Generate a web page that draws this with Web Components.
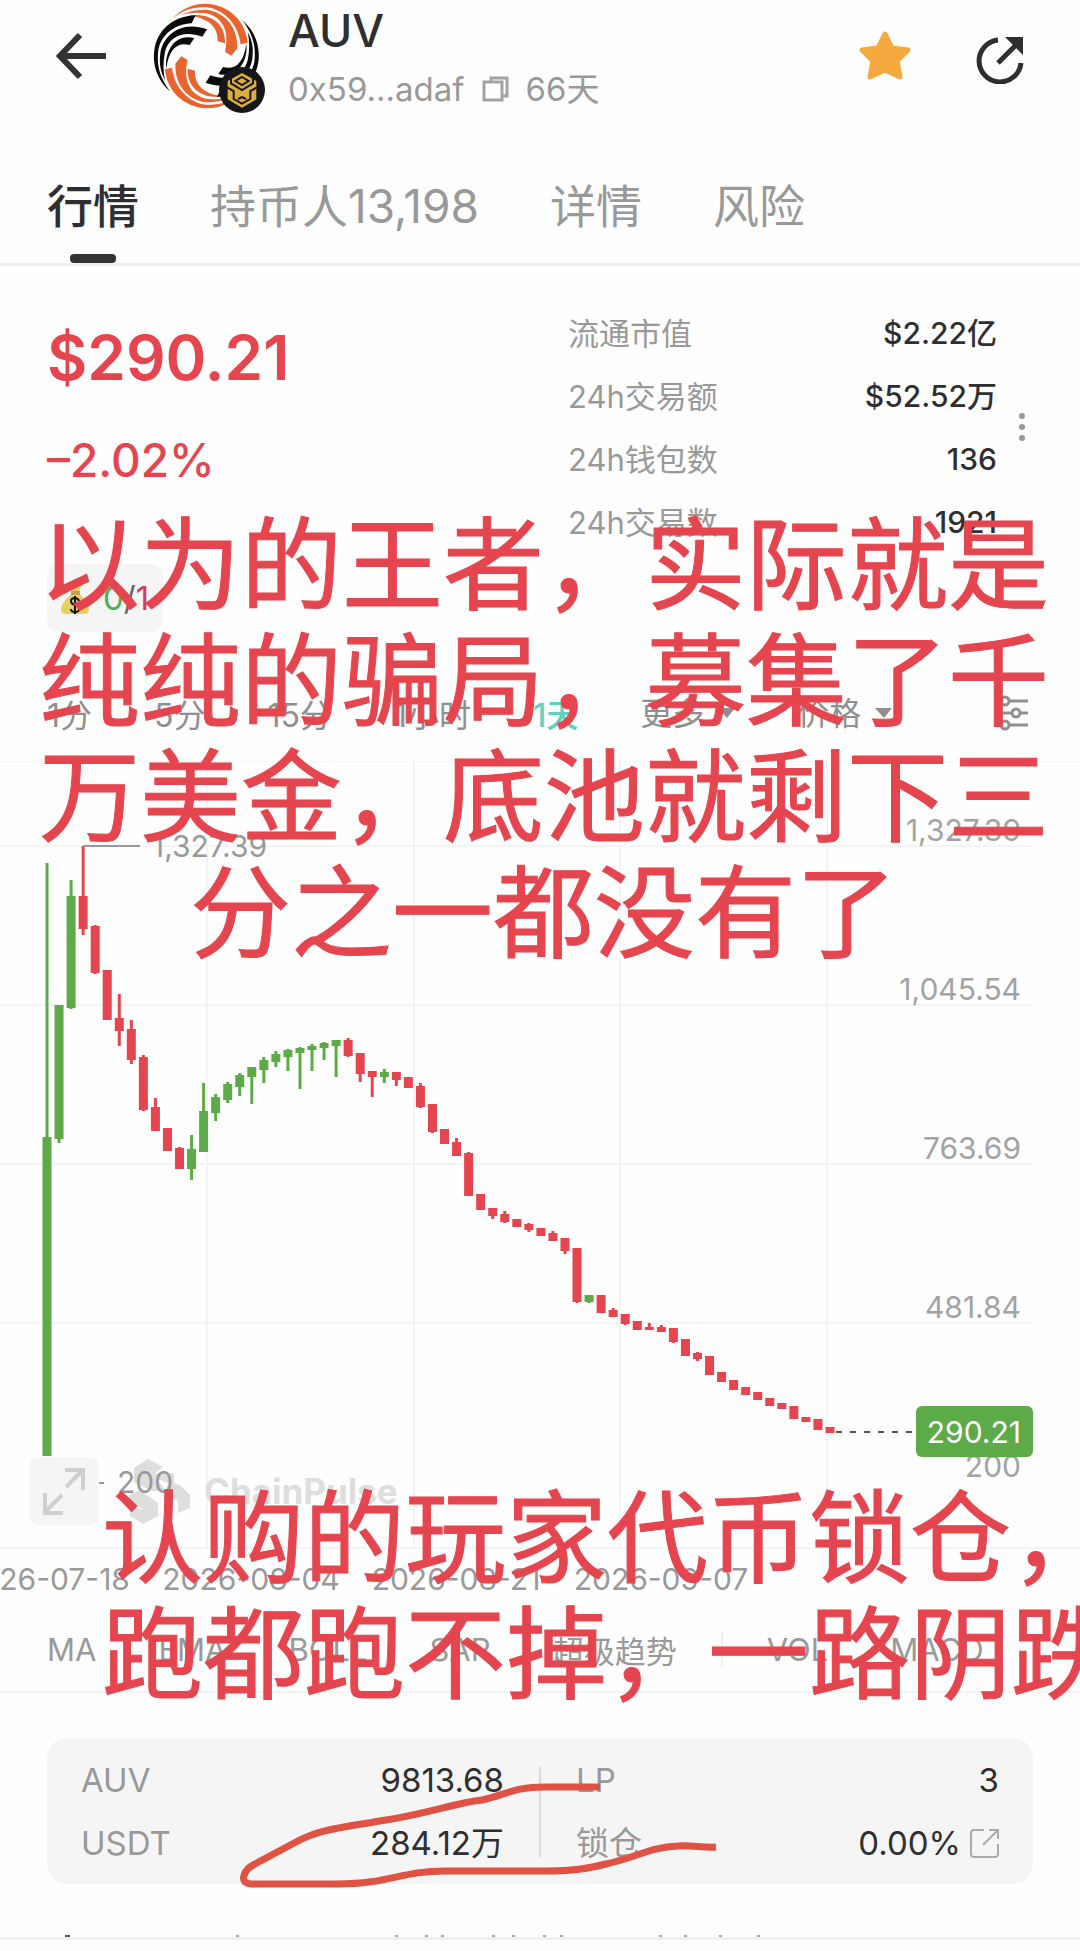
<!DOCTYPE html>
<html lang="zh-CN">
<head>
<meta charset="utf-8">
<meta name="viewport" content="width=device-width, initial-scale=1">
<title>AUV</title>
<style>
  :root {
    --text: #2f2f31;
    --muted: #999;
    --red: #e5454e;
    --green: #5cab48;
    --surface: #f5f5f5;
    --line: #f0f0f0;
    --gutter: 47px;
  }

  body {
    margin: 0;
    background: #fefefe;
    color: var(--text);
    font-family: Inter, "Noto Sans CJK SC", sans-serif;
    font-size: 33px;
  }
</style>
</head>
<body>
<token-page>
  <token-header name="AUV" address="0x59...adaf" age="66天"></token-header>
  <token-tabs>
    <a href="#market" aria-current="page">行情</a>
    <a href="#holders">持币人13,198</a>
    <a href="#detail">详情</a>
    <a href="#risk">风险</a>
  </token-tabs>
  <price-summary price="$290.21" change="–2.02%"></price-summary>
  <interval-bar></interval-bar>
  <price-chart></price-chart>
  <indicator-bar></indicator-bar>
  <pool-card></pool-card>
  <list-peek></list-peek>
  <note-text slot="notes" class="top">以为的王者，实际就是<br>纯纯的骗局，募集了千<br>万美金，底池就剩下三<br>分之一都没有了</note-text>
  <note-text slot="notes" class="bottom">认购的玩家代币锁仓，<br>跑都跑不掉，一路阴跌</note-text>
</token-page>

<script>
const resetStyles = `
  * { box-sizing: border-box; }
  button, select {
    margin: 0;
    padding: 0;
    border: none;
    background: none;
    color: inherit;
    font: inherit;
    cursor: pointer;
    appearance: none;
  }
  svg { display: block; }
  dl, dd, p, h1 { margin: 0; font-weight: inherit; }
`;

class BaseElement extends HTMLElement {
  constructor() {
    super();
    this.attachShadow({ mode: "open" });
  }

  connectedCallback() {
    const template = document.createElement("template");
    template.innerHTML = `<style>${resetStyles}${this.styles()}</style>${this.render()}`;
    this.shadowRoot.replaceChildren(template.content.cloneNode(true));
  }

  styles() {
    return "";
  }

  render() {
    return "";
  }
}

class TokenPage extends BaseElement {
  styles() {
    return `
      :host { display: block; position: relative; overflow: hidden; }
      ::slotted(note-text) { position: absolute; pointer-events: none; }
      ::slotted(.top) { top: 500px; left: 39px; right: 32px; text-align: center; }
      ::slotted(.bottom) { top: 1473px; left: 102px; }
    `;
  }

  render() {
    return `<main><slot></slot></main><slot name="notes"></slot>`;
  }
}

class NoteText extends BaseElement {
  styles() {
    return `
      :host {
        display: block;
        color: var(--red);
        font-family: "Noto Sans CJK SC", sans-serif;
        font-size: 101px;
        line-height: 116px;
        white-space: nowrap;
        -webkit-text-stroke: 1px var(--red);
      }
    `;
  }

  render() {
    return `<slot></slot>`;
  }
}

class TokenHeader extends BaseElement {
  styles() {
    return `
      :host {
        display: flex;
        align-items: flex-start;
        padding: 2px 56px;
      }
      button { display: grid; place-items: center; }
      .icon { height: 108px; }
      .logo { margin-left: 47px; }
      .info { margin-left: 22px; flex: 1; line-height: 58px; }
      h1 { font-size: 45px; font-weight: 500; line-height: 58px; }
      .sub { display: flex; align-items: center; gap: 17px; color: var(--muted); }
      .share { height: 116px; margin-left: 64px; }
    `;
  }

  render() {
    const orange = `
      <path d="M97 56C130 22 165 10 200 11C265 14 318 60 324 128L303 133C296 75 255 28 200 22C160 20 130 30 97 56Z"/>
      <path d="M125 45C150 32 175 29 200 29C255 36 295 80 293 145L275 167L256 156C272 90 245 50 200 40C170 37 150 38 125 45Z"/>
      <path d="M148 47C205 38 258 65 256 130L234 124C236 80 205 53 148 47Z"/>`;
    const black = `
      <path d="M92 275C50 240 38 190 44 150C52 95 95 48 168 46L156 70C110 72 66 100 56 150C50 200 62 235 92 275Z"/>
      <path d="M76 240C62 215 58 190 62 160C70 105 125 60 202 88L188 110C130 90 88 110 76 155C70 185 70 215 76 240Z"/>
      <path d="M80 205C74 160 102 98 164 114L150 135C115 125 88 145 80 205Z"/>`;
    return `
      <button class="icon" aria-label="返回">
        <svg width="50" height="46" viewBox="0 0 50 46" fill="none" stroke="#333" stroke-width="6">
          <path d="M50 23H3M24 2L4 23L24 44"/>
        </svg>
      </button>
      <svg class="logo" width="113" height="113" viewBox="40 6 339 339" aria-hidden="true">
        <g fill="#e9652f">${orange}<g transform="rotate(180 200 168)">${orange}</g></g>
        <g fill="#0b0b0b">${black}<g transform="rotate(180 200 168)">${black}</g></g>
        <circle cx="307" cy="270" r="69" fill="#17171b"/>
        <path d="M307 219L350 243V298L307 323L264 298V243Z" fill="#dcae3b"/>
        <g fill="none" stroke="#17171b" stroke-width="6">
          <path d="M307 231L327 243L307 255L287 243ZM262 262L282 273V297L307 311L332 297V273L352 262M274 236V250L307 270L340 250V236M295 297L307 291L319 297"/>
        </g>
      </svg>
      <div class="info">
        <h1>${this.getAttribute("name")}</h1>
        <div class="sub">
          <span>${this.getAttribute("address")}</span>
          <button aria-label="复制">
            <svg width="27" height="26" viewBox="0 0 27 26" fill="none" stroke="#a3a3a3" stroke-width="3">
              <path d="M2 6H20V24H2ZM9 6V2H25V20H20"/>
            </svg>
          </button>
          <span>${this.getAttribute("age")}</span>
        </div>
      </div>
      <button class="icon" aria-label="收藏">
        <svg width="54" height="52" viewBox="0 0 54 52" fill="#f5a93e" stroke="#f5a93e" stroke-width="5" stroke-linejoin="round">
          <path d="M27 4L34 18L50 20L39 31L42 47L27 40L12 47L15 31L4 20L20 18Z"/>
        </svg>
      </button>
      <button class="icon share" aria-label="分享">
        <svg width="48" height="48" viewBox="0 0 48 48" fill="none" stroke="#2f2f31" stroke-width="5">
          <path d="M22 4A21 21 0 1 0 45 27M22 27L42 7"/>
          <path d="M29 1H47V19Z" fill="#2f2f31" stroke="none"/>
        </svg>
      </button>
    `;
  }
}

class TokenTabs extends BaseElement {
  styles() {
    return `
      :host { display: block; border-bottom: 3px solid var(--line); }
      nav { display: flex; gap: 71px; padding: 53px var(--gutter) 0; font-size: 46px; line-height: 66px; }
      ::slotted(a) { position: relative; padding-bottom: 24px; color: var(--muted); text-decoration: none; }
      ::slotted(a[aria-current]) { color: var(--text); font-weight: 500; }
      ::slotted(a[aria-current])::after {
        content: "";
        position: absolute;
        bottom: 0;
        left: calc(50% - 23px);
        width: 46px;
        height: 9px;
        border-radius: 4px;
        background: #333;
      }
    `;
  }

  render() {
    return `<nav><slot></slot></nav>`;
  }
}

class PriceSummary extends BaseElement {
  styles() {
    return `
      :host {
        display: grid;
        grid-template-columns: 1fr 1fr;
        gap: 56px;
        padding: 36px var(--gutter) 0;
      }
      .quote { padding-top: 16px; color: var(--red); font-weight: 500; }
      .price { font-size: 62px; font-weight: 600; line-height: 80px; }
      .change { margin-top: 32px; font-size: 46px; line-height: 60px; }
      .signals {
        display: inline-flex;
        align-items: center;
        gap: 14px;
        height: 68px;
        margin-top: 74px;
        padding: 0 14px;
        border-radius: 12px;
        background: var(--surface);
        color: #666;
        font-weight: 400;
      }
      .ok { color: #4cb04f; }
      .bad { color: #c9435e; }
      .stats { display: flex; gap: 14px; align-items: flex-start; font-size: 31px; }
      dl { flex: 1; line-height: 63px; }
      dl div { display: flex; justify-content: space-between; height: 63px; }
      dt { color: var(--muted); }
      dd { font-size: 30px; font-weight: 500; }
      .more { width: 22px; margin-top: 108px; }
    `;
  }

  render() {
    const stats = [
      ["流通市值", "$2.22亿"],
      ["24h交易额", "$52.52万"],
      ["24h钱包数", "136"],
      ["24h交易数", "1921"],
    ];
    return `
      <div class="quote">
        <p class="price">${this.getAttribute("price")}</p>
        <p class="change">${this.getAttribute("change")}</p>
        <div class="signals">
          <svg width="28" height="34" viewBox="0 0 28 34" aria-hidden="true">
            <path d="M8 3Q14 7 21 3L18 11H11ZM10 13H19Q28 22 28 29Q28 33 23 33H5Q0 33 0 29Q0 22 10 13Z" fill="#e6cf63"/>
            <path d="M10 10H19V14H10Z" fill="#c99c4b"/>
            <path d="M18 20Q17 17 14 17Q10 17 10 20Q10 23 14 24Q18 25 18 28Q18 31 14 31Q10 31 10 28M14 15V33" fill="none" stroke="#111" stroke-width="2"/>
          </svg>
          <span><span class="ok">0</span>/<span class="bad">1</span></span>
        </div>
      </div>
      <div class="stats">
        <dl>${stats.map(([label, value]) => `<div><dt>${label}</dt><dd>${value}</dd></div>`).join("")}</dl>
        <button class="more" aria-label="更多数据">
          <svg width="22" height="34" viewBox="0 0 22 34" fill="#999">
            <circle cx="11" cy="6" r="3"/><circle cx="11" cy="17" r="3"/><circle cx="11" cy="28" r="3"/>
          </svg>
        </button>
      </div>
    `;
  }
}

class IntervalBar extends BaseElement {
  styles() {
    return `
      :host {
        display: flex;
        align-items: center;
        gap: 62px;
        height: 64px;
        margin: 49px 0 16px;
        padding: 0 52px 0 var(--gutter);
        color: #8f8f8f;
        font-size: 32px;
      }
      button { white-space: nowrap; }
      [aria-pressed="true"] { color: #5fd3bd; font-weight: 500; }
      .pick { display: flex; align-items: center; gap: 13px; }
      .settings { margin-left: auto; }
    `;
  }

  render() {
    const intervals = ["1分", "5分", "15分", "1小时", "1天"];
    const pick = (label, text) => `
      <label class="pick">
        <select aria-label="${label}"><option>${text}</option></select>
        <svg width="17" height="12" viewBox="0 0 17 12" fill="#8f8f8f"><path d="M0 1H17L9 11Z"/></svg>
      </label>`;
    return `
      ${intervals.map((t) => `<button aria-pressed="${t === "1天"}">${t}</button>`).join("")}
      ${pick("周期", "更多")}
      ${pick("显示", "价格")}
      <button class="settings" aria-label="图表设置">
        <svg width="34" height="36" viewBox="0 0 34 36" fill="none" stroke="#8f8f8f" stroke-width="3">
          <path d="M0 6H7M15 6H34M0 18H18M26 18H34M0 30H7M15 30H34"/>
          <circle cx="11" cy="6" r="4"/><circle cx="22" cy="18" r="4"/><circle cx="11" cy="30" r="4"/>
        </svg>
      </button>
    `;
  }
}

// wick top, body top, body bottom, wick bottom; 1 marks a rising day
const candles = [
  [102, 376, 695, 695, 1], [244, 244, 378, 382, 1], [119, 135, 247, 248, 1], [85, 135, 168, 174],
  [164, 165, 212, 213], [209, 209, 259, 259], [233, 257, 270, 285], [259, 268, 299, 303],
  [294, 296, 349, 350], [337, 346, 370, 370], [367, 367, 390, 390], [386, 387, 408, 408],
  [374, 388, 408, 419, 1], [322, 350, 391, 391, 1], [333, 336, 352, 360, 1], [321, 323, 339, 342, 1],
  [312, 314, 326, 335, 1], [306, 306, 316, 343, 1], [296, 299, 309, 322, 1], [290, 293, 301, 306, 1],
  [288, 289, 296, 310, 1], [286, 287, 292, 328, 1], [283, 285, 289, 310, 1], [281, 282, 287, 299, 1],
  [279, 279, 285, 316, 1], [277, 279, 295, 296], [292, 292, 313, 321], [310, 310, 316, 336],
  [308, 311, 316, 322, 1], [311, 311, 319, 325], [316, 316, 327, 327], [322, 325, 346, 347],
  [343, 343, 371, 372], [368, 368, 383, 383], [377, 381, 395, 395], [391, 392, 435, 435],
  [433, 433, 449, 449], [447, 447, 455, 458], [450, 453, 461, 462], [458, 458, 466, 466],
  [462, 463, 469, 471], [467, 467, 475, 475], [470, 472, 480, 480], [477, 477, 490, 493],
  [487, 487, 541, 542], [534, 534, 541, 542, 1], [534, 534, 552, 552], [547, 549, 556, 556],
  [553, 553, 563, 564], [560, 560, 569, 569], [562, 566, 569, 569], [564, 566, 571, 571],
  [567, 567, 581, 582], [578, 578, 595, 595], [591, 592, 598, 600], [595, 595, 614, 614],
  [611, 611, 621, 621], [619, 619, 629, 629], [626, 626, 634, 634], [631, 631, 639, 639],
  [637, 637, 645, 645], [642, 642, 648, 648], [645, 645, 658, 658], [656, 656, 661, 661],
  [658, 658, 669, 669], [666, 666, 672, 672],
];

class PriceChart extends BaseElement {
  styles() {
    return `
      :host { display: block; position: relative; }
      .plot { width: 100%; height: auto; }
      .grid { stroke: #f4f4f4; stroke-width: 2; }
      .up { fill: var(--green); }
      .down { fill: var(--red); }
      text { fill: #a3a3a3; font-size: 30px; }
      .axis { text-anchor: end; }
      .dates { text-anchor: middle; }
      .mark { fill: #999; }
      .brand { fill: #dedede; font-size: 35px; font-weight: 700; }
      .tag { fill: #fff; }
      .expand {
        position: absolute;
        left: 29px;
        bottom: 76px;
        display: grid;
        place-items: center;
        width: 70px;
        height: 68px;
        border-radius: 10px;
        background: var(--surface);
      }
    `;
  }

  renderCandle([high, top, bottom, low, rising], i) {
    const x = 47 + (i * 783) / 65;
    return `<g class="${rising ? "up" : "down"}">
      <rect x="${x - 1.5}" y="${high}" width="3" height="${low - high}"/>
      <rect x="${x - 4.5}" y="${top}" width="9" height="${bottom - top}"/>
    </g>`;
  }

  render() {
    const prices = ["1,327.39", "1,045.54", "763.69", "481.84", "200"];
    const dates = ["2026-07-18", "2026-08-04", "2026-08-21", "2026-09-07"];
    return `
      <svg class="plot" viewBox="0 0 1080 840" role="img" aria-label="AUV K线图">
        <path class="grid" d="M0 0H1080M0 85H1033M0 244H1033M0 403H1033M0 562H1033M0 787H1080M207 0V787M414 0V787M620 0V787M827 0V787"/>
        <g fill="#dedede">
          <path d="M134 707L148 698L163 706L154 713L174 712V724L157 718L166 730H152L134 721Z"/>
          <path d="M168 720L180 724L190 734V747L178 752V740L166 732Z"/>
          <path d="M129 734L140 729L158 742V755L143 763L130 755V745L144 749L130 741Z"/>
        </g>
        <text class="brand" x="204" y="743">ChainPulse</text>
        ${candles.map(this.renderCandle).join("")}
        <path d="M83 85H140M98 722H104" stroke="#999" stroke-width="2"/>
        <text class="mark" x="152" y="96">1,327.39</text>
        <text class="mark" x="117" y="732">200</text>
        <path d="M836 671H914" stroke="#555" stroke-width="2" stroke-dasharray="6 8"/>
        <g class="axis">${prices.map((p, i) => `<text x="1021" y="${80 + i * 159}">${p}</text>`).join("")}</g>
        <rect x="916" y="645" width="117" height="51" rx="6" fill="#5cab48"/>
        <text class="axis tag" x="1021" y="682">290.21</text>
        <g class="dates">${dates.map((d, i) => `<text class="mark" x="${46 + i * 205}" y="829">${d}</text>`).join("")}</g>
      </svg>
      <button class="expand" aria-label="全屏">
        <svg width="44" height="48" viewBox="0 0 44 48" fill="none" stroke="#cfcfcf" stroke-width="4">
          <path d="M23 3H41V23M40 4L24 20M21 46H3V26M4 44L20 28"/>
        </svg>
      </button>
    `;
  }
}

class IndicatorBar extends BaseElement {
  styles() {
    return `
      :host {
        display: flex;
        align-items: center;
        gap: 62px;
        height: 84px;
        padding: 6px var(--gutter) 0;
        border-bottom: 2px solid #f4f4f4;
        color: var(--muted);
        font-size: 31px;
      }
      button { white-space: nowrap; }
      hr { width: 2px; height: 36px; margin: 0 -18px; border: none; background: #eee; }
    `;
  }

  render() {
    const button = (name) => `<button>${name}</button>`;
    return `
      ${["MA", "EMA", "BOLL", "SAR", "超级趋势"].map(button).join("")}
      <hr>
      ${["VOL", "MACD"].map(button).join("")}
    `;
  }
}

class PoolCard extends BaseElement {
  styles() {
    return `
      :host {
        display: grid;
        grid-template-columns: 1fr 2px 1fr;
        gap: 35px;
        position: relative;
        margin: 45px var(--gutter) 0;
        padding: 11px 34px 9px;
        border-radius: 20px;
        background: var(--surface);
        line-height: 63px;
      }
      dl div { display: flex; justify-content: space-between; height: 63px; }
      dt { color: var(--muted); }
      dd { display: flex; align-items: center; gap: 9px; }
      .rule { margin: 18px 0; background: #d9d9d9; }
      .scribble { position: absolute; left: 190px; top: 40px; pointer-events: none; }
    `;
  }

  render() {
    return `
      <dl>
        <div><dt>AUV</dt><dd>9813.68</dd></div>
        <div><dt>USDT</dt><dd>284.12万</dd></div>
      </dl>
      <span class="rule"></span>
      <dl>
        <div><dt>LP</dt><dd>3</dd></div>
        <div>
          <dt>锁仓</dt>
          <dd>0.00%
            <a href="#lock" aria-label="锁仓详情">
              <svg width="29" height="29" viewBox="0 0 29 29" fill="none" stroke="#aaa" stroke-width="2">
                <path d="M14 1H4Q1 1 1 4V25Q1 28 4 28H25Q28 28 28 25V15M19 1H28V10M28 1L13 16"/>
              </svg>
            </a>
          </dd>
        </div>
      </dl>
      <svg class="scribble" width="484" height="112" viewBox="237 1777 484 112" fill="none" stroke="#e05243" stroke-width="7" aria-hidden="true">
        <path d="M600 1786H545C513 1786 506 1794 482 1799C455 1802 430 1812 386 1819C340 1827 320 1828 296 1841L255 1863C243 1869 238 1883 252 1883H337C390 1883 400 1870 445 1870H546C575 1870 590 1867 606 1863C635 1857 650 1846 678 1845C690 1844 705 1847 716 1846"/>
      </svg>
    `;
  }
}

// Tips of the next list, just above its divider
class ListPeek extends BaseElement {
  styles() {
    return `
      :host { display: block; padding: 51px 0 13px; }
      .edge { border-bottom: 3px solid var(--line); }
    `;
  }

  render() {
    const tips = [237, 396, 426, 442, 493, 513, 544, 561, 660, 685, 720, 758];
    return `
      <div class="edge">
        <svg width="800" height="2" viewBox="0 0 800 2" fill="#aaa" aria-hidden="true">
          <rect x="65" width="5" height="2" fill="#555"/>
          ${tips.map((x) => `<rect x="${x - 1}" width="3" height="2"/>`).join("")}
        </svg>
      </div>
    `;
  }
}

customElements.define("note-text", NoteText);
customElements.define("token-header", TokenHeader);
customElements.define("token-tabs", TokenTabs);
customElements.define("price-summary", PriceSummary);
customElements.define("interval-bar", IntervalBar);
customElements.define("price-chart", PriceChart);
customElements.define("indicator-bar", IndicatorBar);
customElements.define("pool-card", PoolCard);
customElements.define("list-peek", ListPeek);
customElements.define("token-page", TokenPage);
</script>
</body>
</html>
